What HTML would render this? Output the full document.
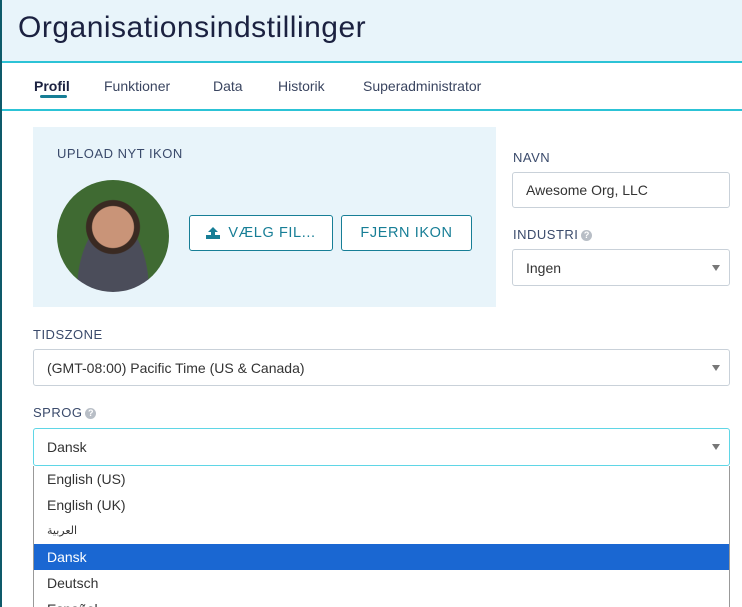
<!DOCTYPE html>
<html><head><meta charset="utf-8"><style>
*{box-sizing:border-box;margin:0;padding:0}
html,body{width:742px;height:607px;overflow:hidden}
body{background:#fff;font-family:"Liberation Sans","DejaVu Sans",sans-serif;position:relative;color:#333}
.edge{position:absolute;left:0;top:0;width:2px;height:607px;background:#0e5a6a;z-index:5}
.hdr{position:absolute;left:2px;top:0;right:0;height:63px;background:#e8f4fa;border-bottom:2px solid #2cc3d6}
.hdr h1{position:absolute;left:16px;top:11px;font-weight:normal;font-size:30px;color:#1b2140;letter-spacing:.5px}
.tabs{position:absolute;left:2px;right:0;top:63px;height:48px;border-bottom:2px solid #2cc3d6}
.tab{position:absolute;top:15px;font-size:14px;color:#3a4560}
.tab.on{font-weight:bold;color:#1b2140}
.ul{position:absolute;left:38px;top:32px;width:27px;height:3px;background:#177e96;border-radius:2px}
.panel{position:absolute;left:33px;top:127px;width:463px;height:180px;background:#e8f4fa}
.lbl{position:absolute;font-size:13px;color:#3a4a6b;letter-spacing:.5px}
.av{position:absolute;left:57px;top:180px;width:112px;height:112px;border-radius:50%;background:radial-gradient(circle at 50% 42%,#c99478 0 24%,#3a2a22 25% 31%,transparent 32%),radial-gradient(ellipse at 50% 100%,#4b4d5a 0 45%,transparent 46%),#3f6a32;overflow:hidden}
.btn{position:absolute;top:215px;height:36px;border:1px solid #177e96;border-radius:3px;background:#fff;color:#177e96;font-size:14.5px;letter-spacing:.6px;display:flex;align-items:center;justify-content:center}
.inp{position:absolute;border:1px solid #c9d1d9;border-radius:3px;background:#fff;font-size:14px;color:#333;padding-left:13px;display:flex;align-items:center}
.arr{position:absolute;right:9px;top:50%;margin-top:-3px;width:0;height:0;border-left:4px solid transparent;border-right:4px solid transparent;border-top:6px solid #777}
.q{display:inline-block;width:11px;height:11px;border-radius:50%;background:#b8bec6;color:#fff;font-size:9px;line-height:11px;text-align:center;vertical-align:1px;margin-left:3px;font-weight:bold}
.list{position:absolute;left:33px;top:466px;width:697px;height:150px;border:1px solid #999;border-top:none;background:#fff}
.it{height:26px;line-height:26px;padding-left:13px;font-size:14px;color:#333}
.it.sel{background:#1a67d2;color:#fff}
</style></head><body>
<div class="edge"></div>
<div class="hdr"><h1>Organisationsindstillinger</h1></div>
<div class="tabs">
<span class="tab on" style="left:32px">Profil</span><div class="ul"></div>
<span class="tab" style="left:102px">Funktioner</span>
<span class="tab" style="left:211px">Data</span>
<span class="tab" style="left:276px">Historik</span>
<span class="tab" style="left:361px">Superadministrator</span>
</div>
<div class="panel"></div>
<div class="lbl" style="left:57px;top:146px">UPLOAD NYT IKON</div>
<div class="av"></div>
<div class="btn" style="left:189px;width:144px"><svg width="14" height="12" viewBox="0 0 14 12" style="margin-right:8px"><path d="M7 0L2 5h3v4h4V5h3z" fill="#177e96"/><rect x="0" y="8" width="14" height="4" fill="#177e96"/></svg>VÆLG FIL...</div>
<div class="btn" style="left:341px;width:131px">FJERN IKON</div>
<div class="lbl" style="left:513px;top:150px">NAVN</div>
<div class="inp" style="left:512px;top:172px;width:218px;height:36px">Awesome Org, LLC</div>
<div class="lbl" style="left:513px;top:227px">INDUSTRI<span class="q">?</span></div>
<div class="inp" style="left:512px;top:249px;width:218px;height:37px">Ingen<span class="arr"></span></div>
<div class="lbl" style="left:33px;top:327px">TIDSZONE</div>
<div class="inp" style="left:33px;top:349px;width:697px;height:37px">(GMT-08:00) Pacific Time (US &amp; Canada)<span class="arr"></span></div>
<div class="lbl" style="left:33px;top:405px">SPROG<span class="q">?</span></div>
<div class="inp" style="left:33px;top:428px;width:697px;height:38px;border-color:#5fd6e6">Dansk<span class="arr"></span></div>
<div class="list">
<div class="it">English (US)</div>
<div class="it">English (UK)</div>
<div class="it" style="font-size:11px">العربية</div>
<div class="it sel">Dansk</div>
<div class="it">Deutsch</div>
<div class="it">Español</div>
</div>
</body></html>
